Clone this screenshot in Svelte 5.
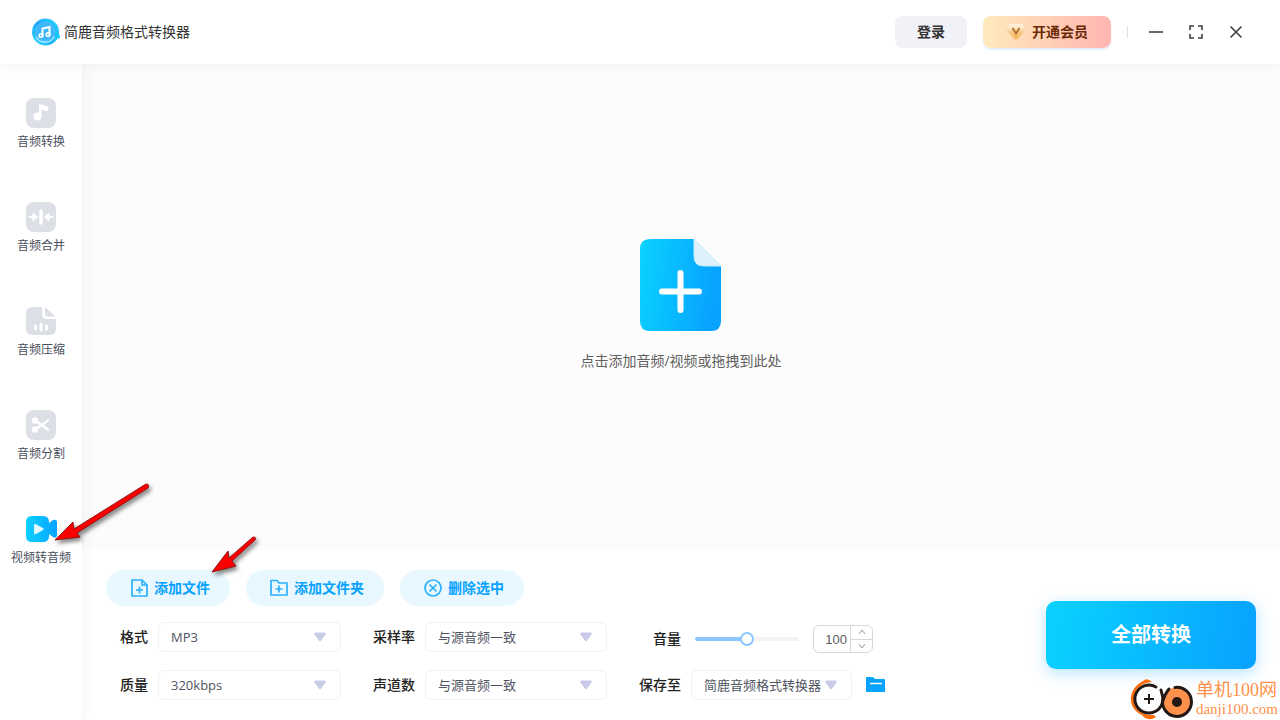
<script lang="ts">
	const navItems = [
		{ id: 'convert', label: '音频转换' },
		{ id: 'merge', label: '音频合并' },
		{ id: 'compress', label: '音频压缩' },
		{ id: 'split', label: '音频分割' },
		{ id: 'video', label: '视频转音频' },
	];

	const formats = ['MP3', 'WAV', 'FLAC', 'AAC'];
	const qualities = ['320kbps', '256kbps', '192kbps', '128kbps'];
	const sampleRates = ['与源音频一致', '44100Hz', '48000Hz'];
	const channels = ['与源音频一致', '单声道', '立体声'];
	const folders = ['简鹿音频格式转换器'];

	let active = $state('video');
	let volume = $state(100);
	let fill = $derived(`${volume / 2}%`);
</script>

{#snippet picker(id: string, options: string[])}
	<div class="select">
		<select {id}>
			{#each options as option}
				<option>{option}</option>
			{/each}
		</select>
		<svg class="caret" width="12" height="10" viewBox="0 0 12 10" aria-hidden="true">
			<path d="M1.5 .5h9c1 0 1.6 1 1 1.900L7.200 8.600c-.6.900-1.800.900-2.400 0L.5 2.400C-.1 1.500.5.5 1.500.5z" fill="#cacbe8" />
		</svg>
	</div>
{/snippet}

<div class="app">
	<header class="header">
		<div class="brand">
			<svg width="28" height="28" viewBox="0 0 28 28" aria-hidden="true">
				<defs>
					<linearGradient id="logo" x1="0" y1="1" x2="1" y2="0">
						<stop offset="0" stop-color="#2fdcfb" />
						<stop offset=".5" stop-color="#1fa6f8" />
						<stop offset="1" stop-color="#29d8fb" />
					</linearGradient>
				</defs>
				<circle cx="13.500" cy="14" r="13.500" fill="url(#logo)" />
				<path d="M21 23c3-2 1-9 4-9 1 0 3 3 3 5 0 1.500-1 1.500-3 1.500-1.500 2.500-2.500 3-4 4z" fill="#12c8f8" />
				<circle cx="13" cy="14" r="10" fill="#4dbcfa" />
				<path d="M4 19a10.500 10.500 0 0 0 18.500-.5" fill="none" stroke="#a2ecff" stroke-width="1.500" />
				<circle cx="13" cy="13.500" r="8.500" fill="#3cb6fa" />
				<path d="M10.500 18V10.500l7-1.500v8" fill="none" stroke="#fff" stroke-width="2" />
				<circle cx="9" cy="17.500" r="1.800" fill="none" stroke="#fff" stroke-width="1.600" />
				<circle cx="16" cy="16.500" r="1.800" fill="none" stroke="#fff" stroke-width="1.600" />
			</svg>
			<span>简鹿音频格式转换器</span>
		</div>
		<div class="header-actions">
			<button class="login">登录</button>
			<button class="vip">
				<svg width="20" height="18" viewBox="0 0 20 18" aria-hidden="true">
					<defs>
						<linearGradient id="gem" x1="0" y1="0" x2="0" y2="1">
							<stop offset="0" stop-color="#fdf0d4" />
							<stop offset="1" stop-color="#f5ac49" />
						</linearGradient>
					</defs>
					<path d="M5 1h10c1 0 1.500.4 2 1l2 4c.5 1 .3 2-.5 2.800l-7 7c-1 1-2 1-3 0l-7-7C.7 8 .5 7 1 6l2-4c.5-.6 1-1 2-1z" fill="url(#gem)" />
					<path d="M5 1h10l2 1 2 5H1l2-5z" fill="#fff" opacity=".25" />
					<path d="M6.500 5l3.500 5.500L13.500 5" fill="none" stroke="#b8702c" stroke-width="2" />
				</svg>
				开通会员
			</button>
			<span class="divider"></span>
			<div class="window-buttons">
				<button aria-label="最小化">
					<svg width="16" height="16" viewBox="0 0 16 16"><path d="M1 8h14" /></svg>
				</button>
				<button aria-label="最大化">
					<svg width="16" height="16" viewBox="0 0 16 16"><path d="M2 6V2h4M10 2h4v4M14 10v4h-4M6 14H2v-4" /></svg>
				</button>
				<button aria-label="关闭">
					<svg width="16" height="16" viewBox="0 0 16 16"><path d="M2.500 2.500l11 11M13.500 2.500l-11 11" /></svg>
				</button>
			</div>
		</div>
	</header>

	<div class="body">
		<nav class="sidebar">
			{#each navItems as item}
				<button class="nav-item" aria-pressed={active === item.id} onclick={() => (active = item.id)}>
					<svg width="32" height="30" viewBox="0 0 32 30" aria-hidden="true">
						{#if item.id === 'convert'}
							<rect x="1" width="30" height="30" rx="8" fill="#dddfe7" />
							<circle cx="12.500" cy="18.500" r="4" fill="#fff" />
							<path d="M14 18.500V8c0-1.500 1-2 2.500-1.500l5 1.500c1.500.5 2 1.500 2 3 0 2-1.500 2.600-3 2l-4-1.500v7z" fill="#fff" />
						{:else if item.id === 'merge'}
							<rect x="1" width="30" height="30" rx="8" fill="#dddfe7" />
							<path d="M16 9v12" stroke="#fff" stroke-width="3.500" stroke-linecap="round" />
							<path d="M4.500 15h4M27.500 15h-4" stroke="#fff" stroke-width="2" stroke-linecap="round" />
							<path d="M8 11l4.500 4L8 19zM24 11l-4.500 4 4.500 4z" fill="#fff" stroke="#fff" stroke-linejoin="round" />
						{:else if item.id === 'compress'}
							<path d="M9 1h8v6c0 4 2 6 6 6h8v9c0 5-2 7-7 7H9c-6 0-8-2-8-8V9c0-6 2-8 8-8z" fill="#dddfe7" />
							<path d="M20 1l10.500 9.500H23c-2 0-3-1-3-3z" fill="#dddfe7" />
							<path d="M10.500 20v3M16 18v6M21.500 20v3" stroke="#fff" stroke-width="3" stroke-linecap="round" />
						{:else if item.id === 'split'}
							<rect x="1" width="30" height="30" rx="8" fill="#dddfe7" />
							<circle cx="10" cy="10.500" r="3.200" fill="#fff" />
							<circle cx="10" cy="19.500" r="3.200" fill="#fff" />
							<path d="M11 11l12 8.500M11 19l12-8.500" stroke="#fff" stroke-width="2.200" stroke-linecap="round" />
						{:else}
							<defs>
								<linearGradient id="cam">
									<stop offset="0" stop-color="#0bd0ff" />
									<stop offset="1" stop-color="#08a3ff" />
								</linearGradient>
							</defs>
							<path d="M7 2h11q6 0 6 6v1l4-3q4-1 4 2v13q0 4-4 2l-4-3v2q0 6-6 6H7q-6 0-6-6V8q0-6 6-6z" fill="url(#cam)" />
							<path d="M9 11.500q0-2 2-1.200l7 3.700q1.500 1 0 2l-7 4q-2 .8-2-1.200z" fill="#e3f7ff" />
						{/if}
					</svg>
					<span>{item.label}</span>
				</button>
			{/each}
		</nav>

		<main class="main">
			<button class="dropzone">
				<svg width="82" height="92" viewBox="0 0 82 92" aria-hidden="true">
					<defs>
						<linearGradient id="doc" x1="0" y1="0" x2="1" y2=".15">
							<stop offset="0" stop-color="#0ad2ff" />
							<stop offset="1" stop-color="#08a2ff" />
						</linearGradient>
					</defs>
					<path d="M10 0h44v17q0 10 10 10h17v55q0 10-10 10H10Q0 92 0 82V10Q0 0 10 0z" fill="url(#doc)" />
					<path d="M54 0l27 27H64q-10 0-10-10z" fill="#dff2fc" stroke="#c5ecfa" />
					<path d="M40.500 34v37M22 52.500h37" stroke="#fff" stroke-width="6" stroke-linecap="round" />
				</svg>
				<span>点击添加音频/视频或拖拽到此处</span>
			</button>

			<section class="panel">
				<div class="controls">
					<div class="file-actions">
						<button>
							<svg width="18" height="20" viewBox="0 0 18 20" aria-hidden="true">
								<path d="M2 2h10l5 5v11H2zM12 2v5h5M9.500 8.500v7M6 12h7" />
							</svg>
							添加文件
						</button>
						<button>
							<svg width="18" height="20" viewBox="0 0 18 20" aria-hidden="true">
								<path d="M1 2.500h6l2 2.500h8v12H1zM9 7.500v7M5.500 11h7" />
							</svg>
							添加文件夹
						</button>
						<button>
							<svg width="18" height="20" viewBox="0 0 18 20" aria-hidden="true">
								<circle cx="9" cy="10" r="8" /><path d="M5.500 6.500l7 7M12.500 6.500l-7 7" />
							</svg>
							删除选中
						</button>
					</div>
					<div class="settings">
						<div class="field">
							<label for="format">格式</label>
							{@render picker('format', formats)}
						</div>
						<div class="field">
							<label for="rate">采样率</label>
							{@render picker('rate', sampleRates)}
						</div>
						<div class="field volume">
							<label for="volume">音量</label>
							<input id="volume" type="range" min="0" max="200" bind:value={volume} style="--fill: {fill}" />
							<div class="spin">
								<input type="number" aria-label="音量数值" min="0" max="200" bind:value={volume} />
								<div class="steps">
									<button aria-label="增大音量" onclick={() => (volume = Math.min(200, volume + 1))}>
										<svg width="8" height="6" viewBox="0 0 8 6"><path d="M1 5l3-4 3 4" /></svg>
									</button>
									<button aria-label="减小音量" onclick={() => (volume = Math.max(0, volume - 1))}>
										<svg width="8" height="6" viewBox="0 0 8 6"><path d="M1 1l3 4 3-4" /></svg>
									</button>
								</div>
							</div>
						</div>
						<div class="field">
							<label for="quality">质量</label>
							{@render picker('quality', qualities)}
						</div>
						<div class="field">
							<label for="channel">声道数</label>
							{@render picker('channel', channels)}
						</div>
						<div class="field save">
							<label for="folder">保存至</label>
							{@render picker('folder', folders)}
							<button class="open-folder" aria-label="打开文件夹">
								<svg width="20" height="16" viewBox="0 0 20 16">
									<path d="M2 0h5l2 2h9q1 0 1 1v12H1q-1 0-1-1V1q0-1 1-1z" fill="#08a3ff" />
									<path d="M4 6.500h12" stroke="#fff" stroke-width="1.500" />
								</svg>
							</button>
						</div>
					</div>
				</div>
				<button class="convert">全部转换</button>
			</section>
		</main>
	</div>

	<svg class="arrow to-video" width="110" height="74" viewBox="0 0 110 74" aria-hidden="true">
		<path d="M5 65L23 47l1 7L96 9q4 0 2 4L27 58l3 4z" fill="#fb0000" stroke="#931212" stroke-linejoin="round" />
	</svg>
	<svg class="arrow to-add" width="64" height="54" viewBox="0 0 64 54" aria-hidden="true">
		<path d="M5 43L21 22l1 7L46 8q4 0 2 3L25 32l4 5z" fill="#fb0000" stroke="#931212" stroke-linejoin="round" />
	</svg>

	<div class="watermark">
		<svg width="64" height="42" viewBox="0 0 64 42" aria-hidden="true">
			<path d="M22 4Q17-1 13 3C-3 11-3 31 12 37c3 4 8 6 14 2l-2-2C10 38 3 30 4 20 5 10 12 5 22 4z" fill="#ff6c09" />
			<circle cx="19" cy="21" r="14" fill="#fff" />
			<circle cx="47" cy="24" r="14.500" fill="#ff914a" />
			<path d="M26 9A14 14 0 1 0 32 26Q34 17 39 11M31 12l2 8" fill="none" stroke="#231815" stroke-width="3" stroke-linecap="round" />
			<path d="M45 9.500A14.500 14.500 0 1 1 33 20" fill="none" stroke="#231815" stroke-width="3" stroke-linecap="round" />
			<circle cx="47" cy="24" r="5" fill="#231815" />
			<path d="M14 21h10M19 16v10" stroke="#231815" stroke-width="2" />
		</svg>
		<div class="watermark-text">
			<span class="site">单机100网</span>
			<span class="domain">danji100.com</span>
		</div>
	</div>
</div>

<style>
	:global(body) {
		background: #fff;
	}
	.app {
		position: relative;
		display: flex;
		flex-direction: column;
		min-height: 100vh;
		overflow: hidden;
		font-family: 'Open Sans', 'Noto Sans CJK SC', sans-serif;
		font-size: 14px;
		line-height: 20px;
		color: #333;
	}
	button,
	input,
	select {
		margin: 0;
		padding: 0;
		border: 0;
		background: none;
		font: inherit;
		color: inherit;
		box-sizing: border-box;
	}
	button {
		cursor: pointer;
	}
	svg {
		flex: none;
	}
	.header {
		position: relative;
		z-index: 2;
		display: flex;
		justify-content: space-between;
		align-items: center;
		box-sizing: border-box;
		height: 64px;
		padding: 0 32px;
		background: #fff;
		box-shadow: 0 0 16px rgba(0, 0, 0, 0.06);
	}
	.brand {
		display: flex;
		align-items: center;
		gap: 4px;
	}
	.header-actions {
		display: flex;
		align-items: center;
		gap: 16px;
	}
	.login,
	.vip {
		height: 32px;
		border-radius: 8px;
		font-weight: 700;
	}
	.login {
		width: 72px;
		background: #f1f2f8;
	}
	.vip {
		display: flex;
		align-items: center;
		justify-content: center;
		gap: 6px;
		width: 128px;
		background: linear-gradient(90deg, #ffebbc, #ffb5b1);
		box-shadow: 0 2px 2px #e0effc;
		color: #6b2a04;
	}
	.divider {
		width: 1px;
		height: 12px;
		background: #e3e3e6;
	}
	.window-buttons {
		display: flex;
		gap: 16px;
	}
	.window-buttons button {
		display: grid;
		place-items: center;
		width: 24px;
		height: 24px;
	}
	.window-buttons path {
		fill: none;
		stroke: #404040;
		stroke-width: 1.6;
	}
	.body {
		flex: 1;
		display: flex;
	}
	.sidebar {
		position: relative;
		z-index: 1;
		display: flex;
		flex-direction: column;
		gap: 51px;
		box-sizing: border-box;
		width: 82px;
		padding-top: 34px;
		background: #fff;
		box-shadow: 0 0 16px rgba(0, 0, 0, 0.06);
	}
	.nav-item {
		display: flex;
		flex-direction: column;
		align-items: center;
		gap: 5px;
		font-size: 12px;
		line-height: 18px;
		color: #4a4f5e;
	}
	.main {
		flex: 1;
		display: flex;
		flex-direction: column;
		min-width: 0;
	}
	.dropzone {
		flex: 1;
		display: flex;
		flex-direction: column;
		align-items: center;
		justify-content: center;
		gap: 20px;
		padding-bottom: 4px;
		background: #fcfcfc;
		color: #606060;
	}
	.panel {
		display: flex;
		align-items: center;
		justify-content: space-between;
		padding: 20px 24px;
		background: #fff;
	}
	.file-actions {
		display: flex;
		gap: 16px;
	}
	.file-actions button {
		display: flex;
		align-items: center;
		gap: 6px;
		height: 36px;
		padding: 0 20px 0 24px;
		border-radius: 18px;
		background: #e9f8ff;
		color: #08a2ff;
		font-weight: 700;
	}
	.file-actions svg {
		fill: none;
		stroke: #2cb0ff;
		stroke-width: 1.7;
		stroke-linejoin: round;
	}
	.settings {
		display: grid;
		grid-template-columns: 235px 234px auto;
		gap: 18px 32px;
		margin-top: 16px;
	}
	.field {
		display: flex;
		align-items: center;
		gap: 10px;
		box-sizing: border-box;
		height: 30px;
	}
	.field label {
		flex: none;
		width: 42px;
		text-align: right;
		font-weight: 500;
		color: #222;
	}
	.select {
		flex: 1;
		display: grid;
		align-items: center;
	}
	.save .select {
		flex: none;
		width: 161px;
	}
	.select select,
	.caret {
		grid-area: 1 / 1;
	}
	.select select {
		appearance: none;
		width: 100%;
		height: 30px;
		padding: 0 12px;
		border: 1px solid #f0f0f6;
		border-radius: 6px;
		font-size: 13px;
		color: #50545f;
	}
	.caret {
		justify-self: end;
		margin-right: 15px;
		pointer-events: none;
	}
	.volume {
		gap: 14px;
		padding-top: 4px;
	}
	.volume input[type='range'] {
		appearance: none;
		width: 104px;
		height: 14px;
	}
	.volume input[type='range']::-webkit-slider-runnable-track {
		height: 4px;
		border-radius: 2px;
		background: linear-gradient(90deg, #8cc8ff var(--fill), #f3f3f3 var(--fill));
	}
	.volume input[type='range']::-webkit-slider-thumb {
		appearance: none;
		box-sizing: border-box;
		width: 14px;
		height: 14px;
		margin-top: -5px;
		border: 2px solid #8cc8ff;
		border-radius: 50%;
		background: #fff;
	}
	.spin {
		display: flex;
		box-sizing: border-box;
		width: 60px;
		height: 28px;
		border: 1px solid #d9d9d9;
		border-radius: 6px;
	}
	.spin input {
		appearance: textfield;
		flex: 1;
		min-width: 0;
		padding: 2px 3px 0 0;
		text-align: right;
		font-family: 'Liberation Sans', sans-serif;
		font-size: 13px;
		color: #606060;
	}
	.spin input::-webkit-inner-spin-button {
		display: none;
	}
	.steps {
		display: flex;
		flex-direction: column;
		width: 21px;
		border-left: 1px solid #d9d9d9;
	}
	.steps button {
		flex: 1;
		display: grid;
		place-items: center;
	}
	.steps button + button {
		border-top: 1px solid #d9d9d9;
	}
	.steps path {
		fill: none;
		stroke: #999;
	}
	.open-folder {
		display: grid;
		margin-left: 4px;
	}
	.convert {
		width: 210px;
		height: 68px;
		border-radius: 10px;
		background: linear-gradient(100deg, #0ad2ff, #08a2ff);
		box-shadow: 0 4px 16px rgba(8, 170, 255, 0.3);
		color: #fff;
		font-size: 20px;
		font-weight: 700;
	}
	.arrow {
		position: absolute;
		z-index: 3;
		pointer-events: none;
		filter: drop-shadow(2px 3px 2px rgba(0, 0, 0, 0.5));
	}
	.to-video {
		left: 50px;
		top: 475px;
	}
	.to-add {
		left: 207px;
		top: 529px;
	}
	.watermark {
		position: absolute;
		right: 2px;
		bottom: 0;
		z-index: 3;
		display: flex;
		align-items: center;
		gap: 2px;
		color: #ff914a;
		pointer-events: none;
	}
	.watermark-text {
		display: flex;
		flex-direction: column;
		font-family: 'Liberation Serif', 'Noto Sans CJK SC', serif;
	}
	.site {
		font-size: 18px;
	}
	.domain {
		font-size: 15px;
		line-height: 18px;
	}
</style>
